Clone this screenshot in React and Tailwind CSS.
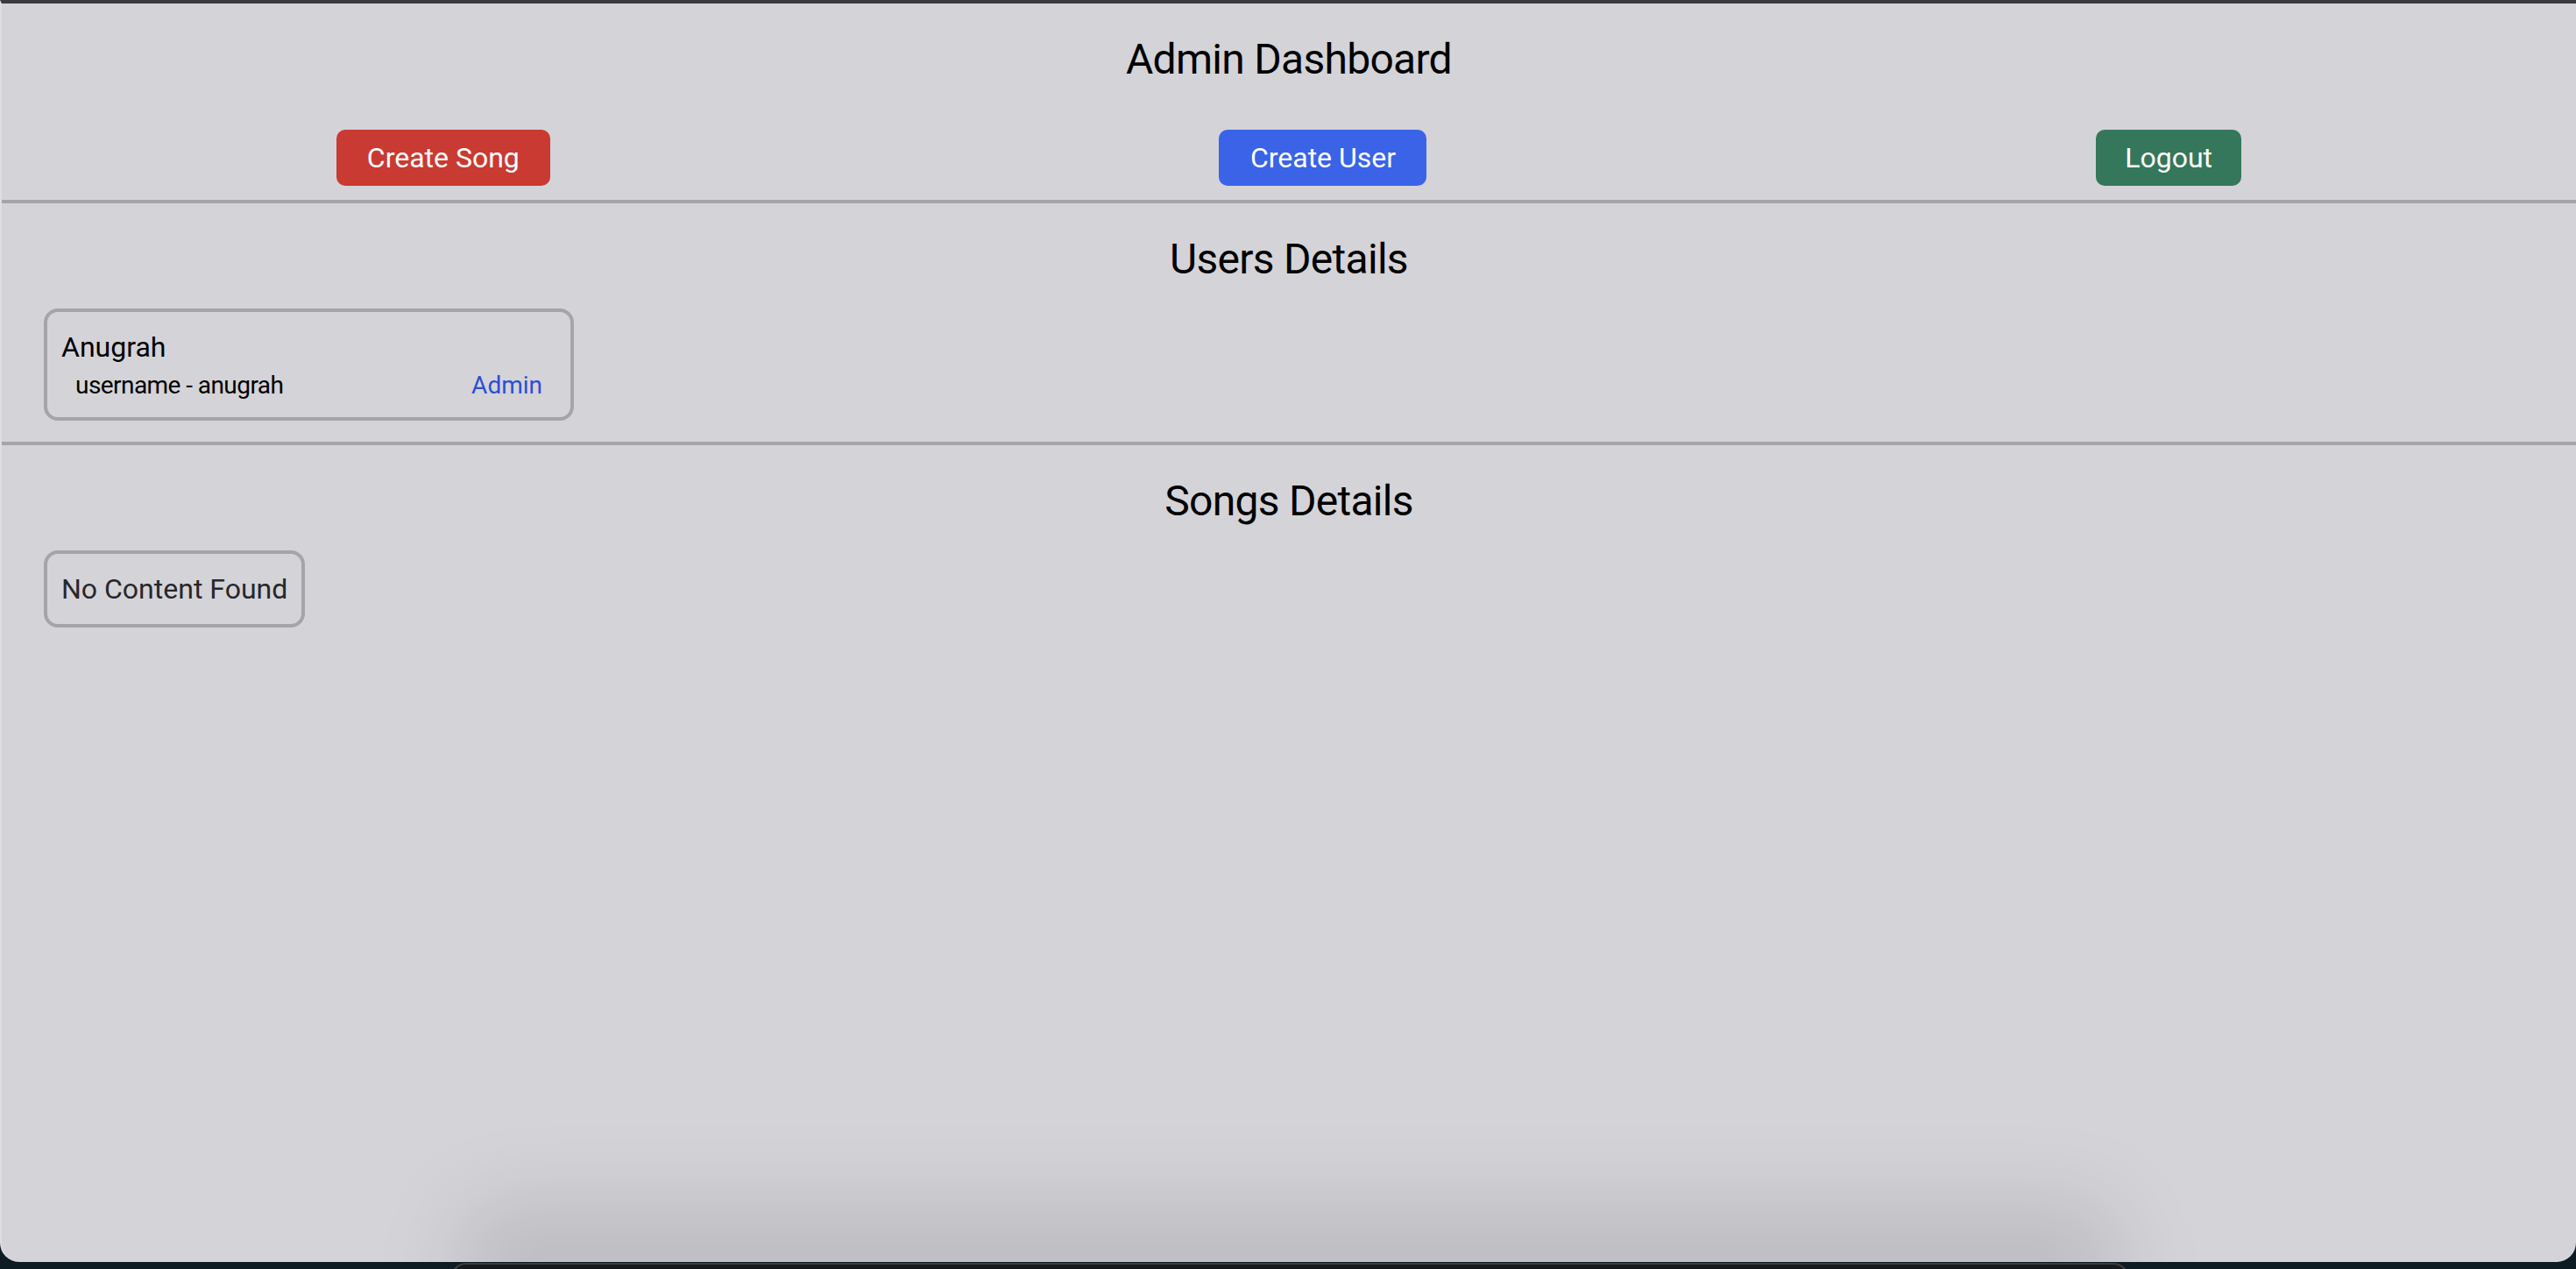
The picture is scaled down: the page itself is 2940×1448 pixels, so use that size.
export default function App() {
  return (
    <div className="relative w-[2940px] h-[1448px] overflow-hidden bg-[#0d1b23]" style={{ fontFamily: 'Roboto, "Noto Sans", sans-serif' }}>
      <div className="relative h-[1440px] bg-[#d4d3d8] border-t-4 border-[#3b3b3d] border-l-2 border-l-[#dedde2] rounded-b-[22px] overflow-hidden flex flex-col">
        <header className="pt-8 pb-4">
          <h1 className="text-center text-[48px] leading-[64px] tracking-[-0.015em] text-black">Admin Dashboard</h1>
          <div className="mt-12 flex justify-around">
            <button className="w-[244px] h-16 rounded-[10px] bg-[#c93a32] text-white text-[32px] leading-[48px]">Create Song</button>
            <button className="w-[237px] h-16 rounded-[10px] bg-[#3a63e7] text-white text-[32px] leading-[48px]">Create User</button>
            <button className="w-[166px] h-16 rounded-[10px] bg-[#35775a] text-white text-[32px] leading-[48px]">Logout</button>
          </div>
        </header>
        <div className="h-1 bg-[#a4a4ab]" />
        <section className="pt-8 pb-6 pl-12">
          <h2 className="-ml-12 text-center text-[48px] leading-[64px] tracking-[-0.015em] text-black">Users Details</h2>
          <div className="mt-6 w-[605px] rounded-[16px] border-4 border-[#a4a4ab] p-4">
            <div className="text-[32px] leading-[48px] text-black">Anugrah</div>
            <div className="flex justify-between px-4 text-[28px] leading-[40px]">
              <span className="text-black tracking-[-0.02em]">username - anugrah</span>
              <span className="text-[#2b4fd4]">Admin</span>
            </div>
          </div>
        </section>
        <div className="h-1 bg-[#a4a4ab]" />
        <section className="pt-8 pl-12">
          <h2 className="-ml-12 text-center text-[48px] leading-[64px] tracking-[-0.015em] text-black">Songs Details</h2>
          <div className="mt-6 inline-block rounded-[16px] border-4 border-[#a4a4ab] p-4">
            <div className="text-[32px] leading-[48px] text-[#27272a]">No Content Found</div>
          </div>
        </section>
        <div className="pointer-events-none absolute left-[520px] bottom-[-80px] w-[1900px] h-[150px] rounded-[60px] bg-black/10 blur-[45px]" />
      </div>
      <div className="absolute left-[514px] top-[1441px] w-[1916px] h-[40px] rounded-t-[18px] border-t-2 border-x-2 border-[#3a3d40] bg-[#16191b]" />
    </div>
  );
}
